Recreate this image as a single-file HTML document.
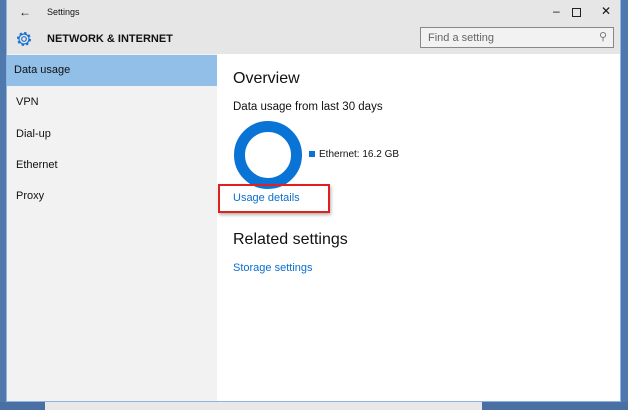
<!DOCTYPE html>
<html><head><style>
body{margin:0;width:628px;height:410px;overflow:hidden;background:#4f78ad;font-family:"Liberation Sans",sans-serif;position:relative}
.win{position:absolute;left:6px;top:0;width:615px;height:402px;background:#fff;border:1px solid #8fb4e0;border-top:none;box-sizing:border-box}
.hdr{position:absolute;left:0;top:0;width:100%;height:54px;background:#e6e6e6}
.side{position:absolute;left:0;top:54px;width:210px;bottom:0;background:#f2f2f2}
.sel{position:absolute;left:0;top:55px;width:210px;height:31px;background:#91bfe7}
.t{position:absolute;font-size:11px;color:#111;white-space:nowrap}
.link{color:#0a6fd0}
</style></head><body>
<div style="position:absolute;left:0;top:402px;width:628px;height:8px;background:#4a6fa3"></div>
<div style="position:absolute;left:45px;top:402px;width:437px;height:8px;background:#e8e8e8"></div>
<div class="win">
<div class="hdr"></div>
<div class="side"></div>
<div class="sel"></div>
<div class="t" style="left:12px;top:5px;font-size:12px">&#8592;</div>
<div class="t" style="left:40px;top:7px;font-size:9px">Settings</div>
<div class="t" style="left:546px;top:4px;font-size:12px">&#8211;</div>
<div style="position:absolute;left:565px;top:8px;width:7px;height:7px;border:1px solid #222"></div>
<div class="t" style="left:594px;top:4px;font-size:12px">&#10005;</div>
<svg style="position:absolute;left:8px;top:30px" width="18" height="18" viewBox="0 0 18 18"><circle cx="9" cy="9" r="6" fill="none" stroke="#1a6fd0" stroke-width="2" stroke-dasharray="2.4 2.3"/><circle cx="9" cy="9" r="5" fill="none" stroke="#1a6fd0" stroke-width="1.2"/><circle cx="9" cy="9" r="2.3" fill="none" stroke="#1a6fd0" stroke-width="1.2"/></svg>
<div class="t" style="left:40px;top:33px;font-size:11px;font-weight:bold">NETWORK &amp; INTERNET</div>
<div style="position:absolute;left:413px;top:27px;width:194px;height:21px;border:1px solid #888;background:#f2f2f2;box-sizing:border-box"></div>
<div class="t" style="left:421px;top:32px;color:#666">Find a setting</div>
<div class="t" style="left:592px;top:30px;color:#777;font-size:11px">&#9906;</div>
<div class="t" style="left:7px;top:64px">Data usage</div>
<div class="t" style="left:9px;top:96px">VPN</div>
<div class="t" style="left:9px;top:128px">Dial-up</div>
<div class="t" style="left:9px;top:159px">Ethernet</div>
<div class="t" style="left:9px;top:190px">Proxy</div>
<div class="t" style="left:226px;top:70px;font-size:16px">Overview</div>
<div class="t" style="left:226px;top:101px;font-size:11.5px">Data usage from last 30 days</div>
<div style="position:absolute;left:227px;top:121px;width:68px;height:68px;border-radius:50%;border:11px solid #0a74d6;box-sizing:border-box"></div>
<div style="position:absolute;left:302px;top:151px;width:6px;height:6px;background:#0a74d6"></div>
<div class="t" style="left:312px;top:149px;font-size:10px">Ethernet: 16.2 GB</div>
<div style="position:absolute;left:211px;top:184px;width:112px;height:29px;border:2px solid #e0201e;box-sizing:border-box;box-shadow:1px 2px 3px rgba(0,0,0,.3)"></div>
<div class="t link" style="left:226px;top:192px">Usage details</div>
<div class="t" style="left:226px;top:231px;font-size:16px">Related settings</div>
<div class="t link" style="left:226px;top:262px">Storage settings</div>
</div>
</body></html>
